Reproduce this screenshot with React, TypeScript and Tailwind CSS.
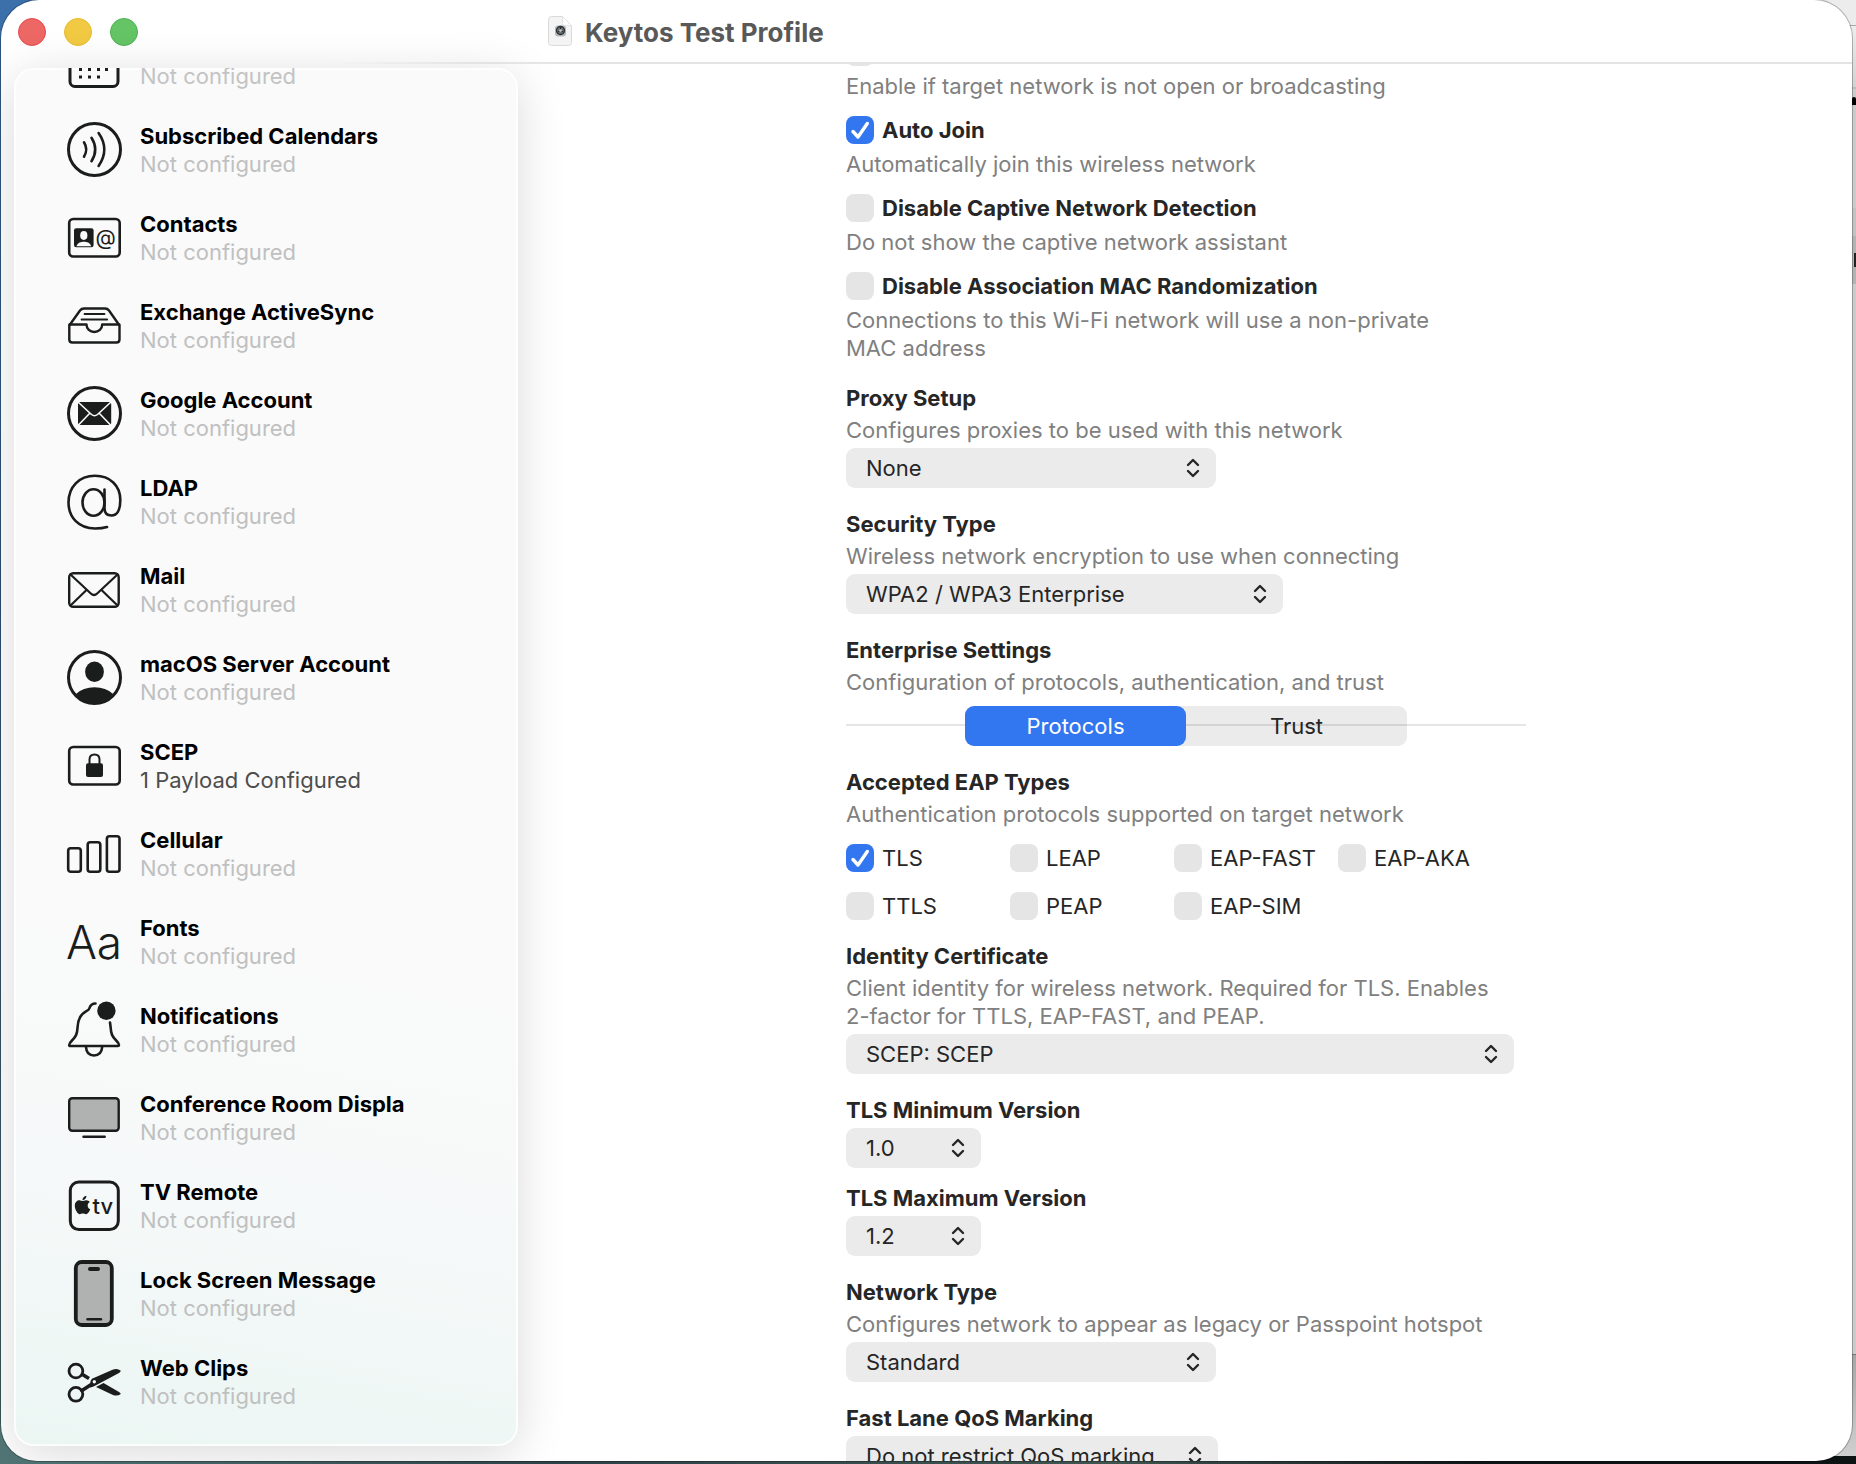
import React, { useId, useState } from "react";
import { FaApple } from "react-icons/fa";

const INK = "#1b1c1c";

type IconProps = { children: React.ReactNode };

function Icon({ children }: IconProps) {
  return (
    <svg
      viewBox="0 0 56 56"
      className="h-14 w-14 shrink-0 overflow-visible"
      fill="none"
      stroke={INK}
      strokeWidth="2.6"
      strokeLinecap="round"
      strokeLinejoin="round"
      aria-hidden="true"
    >
      {children}
    </svg>
  );
}

const icons = {
  calendar: (
    <Icon>
      <rect x="4" y="6" width="48" height="46.500" rx="5" strokeWidth="3" />
      <g fill={INK} stroke="none">
        <rect x="13" y="34" width="3" height="3" />
        <rect x="22" y="34" width="3" height="3" />
        <rect x="31" y="34" width="3" height="3" />
        <rect x="39" y="34" width="3" height="3" />
        <rect x="13" y="41.500" width="3" height="3" />
        <rect x="22" y="41.500" width="3" height="3" />
        <rect x="31" y="41.500" width="3" height="3" />
      </g>
    </Icon>
  ),
  subscribed: (
    <Icon>
      <circle cx="28.500" cy="27.500" r="26" strokeWidth="3" />
      <path d="M18 20.300Q22.500 27.500 18 34.700M25.500 15.800Q33 27.500 25.500 39.200M32.600 11Q44 27.500 32.600 44" />
    </Icon>
  ),
  contacts: (
    <Icon>
      <rect x="3.200" y="9" width="50.500" height="37.500" rx="4" />
      <rect x="8" y="18.300" width="19.600" height="19" rx="2.200" fill={INK} stroke="none" />
      <g fill="#fafafa" stroke="none">
        <ellipse cx="17.800" cy="25.500" rx="3.600" ry="4.400" />
        <path d="M10.500 36.300C11.500 32.500 15 31.800 17.800 31.800S24.200 32.500 25.200 36.300Z" />
      </g>
      <text x="39.700" y="34.500" textAnchor="middle" fontSize="21" fill={INK} stroke="none">
        @
      </text>
    </Icon>
  ),
  tray: (
    <Icon>
      <path d="M3.300 27.500V41.500Q3.300 44.500 6.300 44.500H50.500Q53.500 44.500 53.500 41.500V27.500L43 12.500Q41.500 10.500 39 10.500H18Q15.500 10.500 14 12.500Z" strokeWidth="2.400" />
      <path d="M3.500 26.500H20.500C20.500 31 24 34 28.300 34S36.200 31 36.200 26.500H53.300" strokeWidth="2.400" />
      <path d="M18.500 16H38.500M15.500 21.500H41.200" strokeWidth="1.800" />
    </Icon>
  ),
  google: (
    <Icon>
      <circle cx="28.500" cy="27.500" r="26" strokeWidth="3" />
      <rect x="12" y="16" width="33.200" height="23" rx="2" fill={INK} stroke="none" />
      <path d="M12 16L25.500 28.500Q28.500 31 31.500 28.500L45 16M12 39.500L23.500 27.500M45 39.500L33.500 27.500" stroke="#fafafa" strokeWidth="1.600" />
    </Icon>
  ),
  ldap: (
    <Icon>
      <path d="M41 53C37 54.300 33 54.500 29 54.500C13 54.500 2.500 43.500 2.500 28.500C2.500 13 13 1.800 29 1.800C44 1.800 54.300 11.500 54.300 26C54.300 36 51 41.500 45.500 41.500C41 41.500 38.500 39 38.500 34V15.500" />
      <ellipse cx="27.500" cy="28.500" rx="11" ry="13.200" />
    </Icon>
  ),
  mail: (
    <Icon>
      <rect x="3.200" y="11.200" width="49.500" height="33.500" rx="4" strokeWidth="2.400" />
      <path d="M4.500 12.500L24.800 31.500Q28 34.500 31.200 31.500L51.500 12.500M4.500 43.500L20.500 28M51.500 43.500L35.500 28" strokeWidth="2.200" />
    </Icon>
  ),
  account: (
    <Icon>
      <circle cx="28.500" cy="27.500" r="26" strokeWidth="3" />
      <ellipse cx="28.500" cy="21.700" rx="9.400" ry="10.300" fill={INK} stroke="none" />
      <path d="M10 44Q17 37.300 28.500 37.300T47 44Q39 53.500 28.500 53.500T10 44Z" fill={INK} stroke="none" />
    </Icon>
  ),
  scep: (
    <Icon>
      <rect x="3.200" y="9" width="50.500" height="37.500" rx="4" />
      <rect x="20" y="25.300" width="17" height="13.700" rx="2" fill={INK} stroke="none" />
      <path d="M23.500 26V21.500Q23.500 16.500 28.500 16.500T33.500 21.500V26" strokeWidth="2" />
    </Icon>
  ),
  cellular: (
    <Icon>
      <rect x="2.200" y="22.200" width="12.600" height="23.600" rx="2.500" />
      <rect x="21.700" y="16.200" width="12.600" height="29.600" rx="2.500" />
      <rect x="40.900" y="10.200" width="12.600" height="35.600" rx="2.500" />
    </Icon>
  ),
  fonts: (
    <Icon>
      <text x="28" y="45" textAnchor="middle" fontSize="46" fontWeight="300" fill={INK} stroke="none">
        Aa
      </text>
    </Icon>
  ),
  bell: (
    <Icon>
      <path d="M29.500 1.500C26 1.500 24.200 3.500 23.300 6.500C22.800 8.200 21.500 8.500 20 9.300C14 12.500 12 18 11.600 25C11.200 32 10 34.500 6 38.500C4.500 40 3.200 41.500 3.200 43Q3.200 44 4.500 44H51.700Q53 44 53 43C53 41.500 51.700 40 50.200 38.500C46.200 34.500 45 32 44.600 25L44 20.500" />
      <path d="M20 45Q20.500 53.500 28 53.500T36.200 45" />
      <circle cx="40.400" cy="8.700" r="9.200" fill={INK} stroke="none" />
    </Icon>
  ),
  display: (
    <Icon>
      <rect x="3.200" y="8.200" width="49.500" height="32.500" rx="3" fill="#b0b2b2" strokeWidth="2.400" />
      <path d="M17.500 46.700H38.700" strokeWidth="2.400" />
    </Icon>
  ),
  tv: (
    <Icon>
      <rect x="4.300" y="4" width="48" height="47.600" rx="8.500" strokeWidth="3" />
      <FaApple x="6" y="16.500" size={21} fill={INK} stroke="none" />
      <text x="36.800" y="35.500" textAnchor="middle" fontSize="22" fontWeight="500" fill={INK} stroke="none">
        tv
      </text>
    </Icon>
  ),
  phone: (
    <Icon>
      <rect x="9.800" y="-4" width="36" height="63" rx="6" fill="#b0b2b2" strokeWidth="3.800" />
      <rect x="22" y="1" width="12" height="4" rx="2" fill={INK} stroke="none" />
      <path d="M21.500 53.300H35" strokeWidth="2.400" />
    </Icon>
  ),
  scissors: (
    <Icon>
      <circle cx="9.900" cy="17" r="6.900" strokeWidth="2.800" />
      <circle cx="9.900" cy="40.300" r="6.900" strokeWidth="2.800" />
      <path d="M16.500 20.500L23 24.500" strokeWidth="3.600" strokeLinecap="butt" />
      <path d="M16 36.500L26 30" strokeWidth="3.600" />
      <path d="M24.500 27.500C25.500 24 28 24 30 23L46.500 15.800Q51.500 14 54.800 16.800Q54.500 18 53 18.900L29.500 31.500Q26 33.500 24 33.500Z" fill={INK} stroke="none" />
      <path d="M30 33L37.500 29L53 38Q54.500 39 54.800 40Q51.500 42.500 47 41Z" fill={INK} stroke="none" />
      <circle cx="28.300" cy="27.700" r="1.700" fill="#f5f8f8" stroke="none" />
    </Icon>
  ),
};

const payloads: { title: string; icon: React.ReactNode; configured?: boolean }[] = [
  { title: "Subscribed Calendars", icon: icons.subscribed },
  { title: "Contacts", icon: icons.contacts },
  { title: "Exchange ActiveSync", icon: icons.tray },
  { title: "Google Account", icon: icons.google },
  { title: "LDAP", icon: icons.ldap },
  { title: "Mail", icon: icons.mail },
  { title: "macOS Server Account", icon: icons.account },
  { title: "SCEP", icon: icons.scep, configured: true },
  { title: "Cellular", icon: icons.cellular },
  { title: "Fonts", icon: icons.fonts },
  { title: "Notifications", icon: icons.bell },
  { title: "Conference Room Displa", icon: icons.display },
  { title: "TV Remote", icon: icons.tv },
  { title: "Lock Screen Message", icon: icons.phone },
  { title: "Web Clips", icon: icons.scissors },
];

function Sidebar() {
  return (
    <aside className="relative z-10 mt-1 mb-[15px] ml-[13px] w-[504px] shrink-0 overflow-hidden rounded-[20px] bg-[linear-gradient(190deg,#fafafa_0%,#fafafa_62%,#f6f9f9_80%,#ebf6f3_100%)] shadow-[inset_0_0_0_2px_rgba(255,255,255,0.8),0_8px_48px_rgba(0,0,0,0.15)]">
      <ul className="flex flex-col gap-8 pl-[52px]">
        <li className="flex h-[22px] items-end gap-[18px] overflow-hidden">
          {icons.calendar}
          <span className="text-[22px] leading-7 text-[#c3c3c3]">Not configured</span>
        </li>
        {payloads.map((p) => (
          <li key={p.title}>
            <button type="button" className="flex w-full items-center gap-[18px] text-left">
              {p.icon}
              <span className="flex flex-col text-[22px] leading-7 whitespace-nowrap">
                <span className="font-bold text-black">{p.title}</span>
                <span className={p.configured ? "text-[#4d4d4c]" : "text-[#bfc0c0]"}>
                  {p.configured ? "1 Payload Configured" : "Not configured"}
                </span>
              </span>
            </button>
          </li>
        ))}
      </ul>
    </aside>
  );
}

function Box({ checked, onChange, label }: { checked: boolean; onChange: () => void; label?: string }) {
  return (
    <span className="relative block size-7 shrink-0">
      <input
        type="checkbox"
        aria-label={label}
        checked={checked}
        onChange={onChange}
        className="block size-7 appearance-none rounded-lg bg-[#e5e5e5] checked:bg-[#3276f0]"
      />
      {checked && (
        <svg viewBox="0 0 28 28" className="pointer-events-none absolute inset-0 size-7" fill="none" stroke="#fff" strokeWidth="3.400" strokeLinecap="round" strokeLinejoin="round">
          <path d="M7 15.500L12 21L21.300 7.500" />
        </svg>
      )}
    </span>
  );
}

function Check({ label, initial = false, bold = false }: { label: string; initial?: boolean; bold?: boolean }) {
  const [on, setOn] = useState(initial);
  return (
    <label className="flex h-7 items-center gap-2 whitespace-nowrap">
      <Box checked={on} onChange={() => setOn(!on)} />
      <span className={bold ? "font-bold" : ""}>{label}</span>
    </label>
  );
}

function Option({ label, note, initial }: { label: string; note: string; initial?: boolean }) {
  return (
    <div className="flex flex-col gap-1.5">
      <Check label={label} initial={initial} bold />
      <p className="max-w-[620px] text-[#808080]">{note}</p>
    </div>
  );
}

function Choice({ label, note, value, width }: { label: string; note?: string; value: string; width: string }) {
  const id = useId();
  return (
    <div className="flex flex-col gap-1">
      <label htmlFor={id} className="font-bold">
        {label}
      </label>
      {note && <p className="max-w-[668px] text-[#808080]">{note}</p>}
      <span className={`relative block ${width}`}>
        <select id={id} className="block h-10 w-full appearance-none rounded-[9px] bg-[#ebebeb] pr-10 pl-5">
          <option>{value}</option>
        </select>
        <svg viewBox="0 0 16 20" className="pointer-events-none absolute top-2.5 right-[15px] h-5 w-4" fill="none" stroke="#262626" strokeWidth="2.400" strokeLinecap="round" strokeLinejoin="round">
          <path d="M3 7L8 2L13 7M3 13L8 18L13 13" />
        </svg>
      </span>
    </div>
  );
}

function Tabs() {
  return (
    <div className="relative mt-1.5 flex justify-center">
      <div className="grid w-[442px] grid-cols-2 rounded-[9px] bg-[#ebebeb]">
        <button type="button" className="relative z-10 h-10 rounded-[9px] bg-[#3276f0] text-white">
          Protocols
        </button>
        <button type="button" className="h-10">
          Trust
        </button>
      </div>
      <div className="pointer-events-none absolute inset-x-0 top-[18px] h-0.5 bg-black/10" />
    </div>
  );
}

function Settings() {
  return (
    <main className="flex min-w-0 flex-1 justify-center overflow-hidden pl-0.5">
      <div className="flex w-[680px] flex-col gap-[22px] text-[22px] leading-7 text-[#262626]">
        <div className="flex flex-col gap-4">
          <div className="flex flex-col gap-1.5">
            <div className="flex h-0.5 items-end overflow-hidden">
              <Box checked={false} onChange={() => {}} label="Enable if target network is not open or broadcasting" />
            </div>
            <p className="text-[#808080]">Enable if target network is not open or broadcasting</p>
          </div>
          <Option label="Auto Join" note="Automatically join this wireless network" initial />
          <Option label="Disable Captive Network Detection" note="Do not show the captive network assistant" />
          <Option
            label="Disable Association MAC Randomization"
            note="Connections to this Wi-Fi network will use a non-private MAC address"
          />
        </div>
        <Choice label="Proxy Setup" note="Configures proxies to be used with this network" value="None" width="w-[370px]" />
        <Choice
          label="Security Type"
          note="Wireless network encryption to use when connecting"
          value="WPA2 / WPA3 Enterprise"
          width="w-[437px]"
        />
        <section className="flex flex-col gap-1">
          <h2 className="font-bold">Enterprise Settings</h2>
          <p className="text-[#808080]">Configuration of protocols, authentication, and trust</p>
          <Tabs />
        </section>
        <fieldset>
          <legend className="mb-1 font-bold">Accepted EAP Types</legend>
          <p className="mb-4 text-[#808080]">Authentication protocols supported on target network</p>
          <div className="grid grid-cols-[repeat(4,164px)] gap-y-5">
            <Check label="TLS" initial />
            <Check label="LEAP" />
            <Check label="EAP-FAST" />
            <Check label="EAP-AKA" />
            <Check label="TTLS" />
            <Check label="PEAP" />
            <Check label="EAP-SIM" />
          </div>
        </fieldset>
        <Choice
          label="Identity Certificate"
          note="Client identity for wireless network. Required for TLS. Enables 2-factor for TTLS, EAP-FAST, and PEAP."
          value="SCEP: SCEP"
          width="w-[668px]"
        />
        <div className="flex flex-col gap-4">
          <Choice label="TLS Minimum Version" value="1.0" width="w-[135px]" />
          <Choice label="TLS Maximum Version" value="1.2" width="w-[135px]" />
        </div>
        <Choice
          label="Network Type"
          note="Configures network to appear as legacy or Passpoint hotspot"
          value="Standard"
          width="w-[370px]"
        />
        <Choice label="Fast Lane QoS Marking" value="Do not restrict QoS marking" width="w-[372px]" />
      </div>
    </main>
  );
}

function TitleBar() {
  return (
    <header className="relative h-16 shrink-0">
      <div className="flex h-full items-center">
        <div className="flex w-[547px] shrink-0 gap-[18px] pl-[17px]">
          <button type="button" aria-label="Close" className="size-7 rounded-full border border-[#e5484a] bg-[#ed6765]" />
          <button type="button" aria-label="Minimize" className="size-7 rounded-full border border-[#e8b92c] bg-[#f2c942]" />
          <button type="button" aria-label="Zoom" className="size-7 rounded-full border border-[#4cb350] bg-[#65c466]" />
        </div>
        <svg viewBox="0 0 26 32" className="h-8 w-[26px] shrink-0" aria-hidden="true">
          <path d="M3.500 0.500H14.500L23.500 9.500V26.500Q23.500 29.500 20.500 29.500H3.500Q0.500 29.500 0.500 26.500V3.500Q0.500 0.500 3.500 0.500Z" fill="#f4f4f4" stroke="#dadada" />
          <path d="M14.500 0.500V7.500Q14.500 9.500 16.500 9.500H23.500Z" fill="#fff" stroke="#e0e0e0" strokeWidth="0.800" />
          <rect x="7" y="9.500" width="11" height="11" rx="3" fill="#b4b8ba" />
          <circle cx="12.500" cy="14.500" r="4" fill="#6a7074" stroke="#2a2f32" strokeWidth="1.300" />
          <path d="M12.500 14.500V11M12.500 14.500L9.500 16.200M12.500 14.500L15.500 16.200" stroke="#1f2427" strokeWidth="0.900" />
          <circle cx="12.500" cy="14.500" r="1.300" fill="#c9cdcf" />
        </svg>
        <h1 className="mt-0.5 ml-[11px] text-[26px] leading-8 font-bold text-[#595959]">Keytos Test Profile</h1>
      </div>
      <div className="absolute inset-x-0 bottom-0 h-0.5 bg-[linear-gradient(90deg,transparent_330px,#e4e4e4_560px)]" />
    </header>
  );
}

/* Sliver of the application window that sits behind this one. */
function BackgroundWindow() {
  return (
    <div className="absolute top-0 right-0 bottom-2 flex w-12 flex-col bg-[#cbcbcb]">
      <div className="h-[26px] border-b border-[#a8a8a8] bg-[#ececec]" />
      <div className="h-[63px] border-b-2 border-[#bcbcbc] bg-linear-to-b from-[#ededed] to-[#d2d2d2]" />
      <div className="mt-2 h-2 w-1 self-end rounded-t-sm bg-black" />
      <div className="mt-[103px] h-7 bg-[#c2c2c2]" />
      <div className="flex h-12 items-center justify-end bg-[#b3b3b3]">
        <div className="h-3.5 w-0.5 bg-[#222]" />
      </div>
      <div className="flex-1" />
      <div className="h-[102px] border-t border-[#777] bg-linear-to-b from-[#a6a6a6] to-[#cfcfcf]" />
    </div>
  );
}

export default function App() {
  return (
    <div className="relative h-screen overflow-hidden bg-[linear-gradient(180deg,#3b70ab_0%,#34618f_40%,#456a6c_97%,#4f7473_100%)] pr-1 pb-[3px] pl-px font-['Inter','Liberation_Sans',sans-serif]">
      <div className="absolute inset-x-0 bottom-0 h-10 bg-[linear-gradient(90deg,#4f7473_0%,#2d4247_30%,#3f5550_60%,#0d1414_80%,#0d1212_100%)]" />
      <BackgroundWindow />
      <div className="relative flex h-full flex-col overflow-hidden rounded-t-[38px] rounded-b-[36px] bg-white shadow-[0_0_0_1px_rgba(0,0,0,0.25)]">
        <TitleBar />
        <div className="flex min-h-0 flex-1">
          <Sidebar />
          <Settings />
        </div>
      </div>
    </div>
  );
}
